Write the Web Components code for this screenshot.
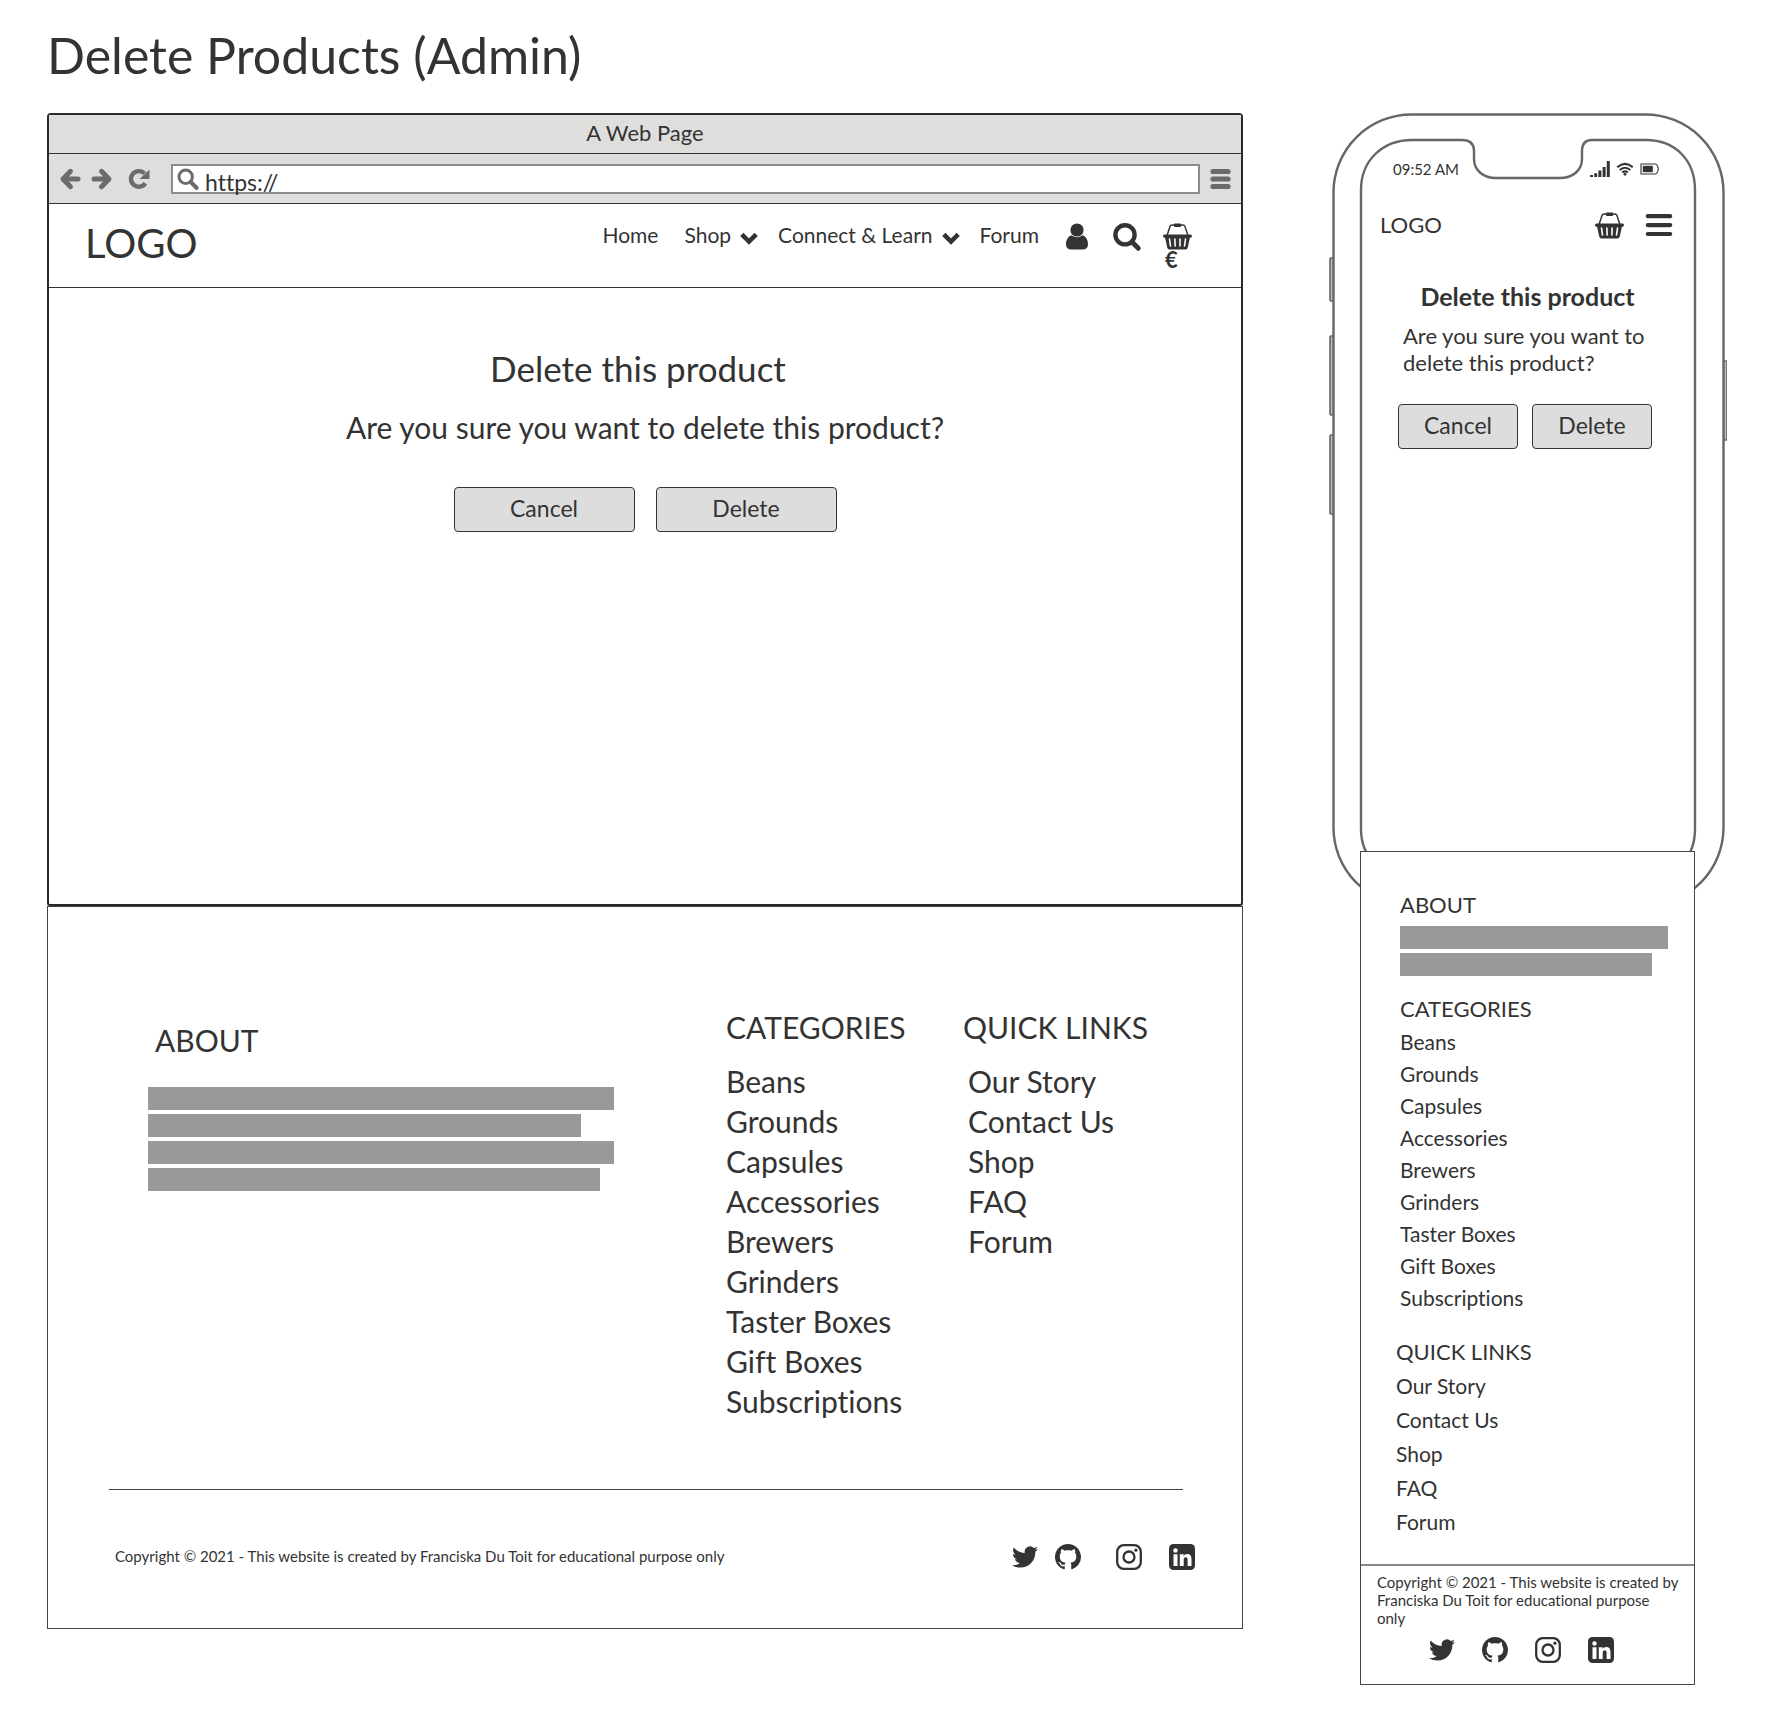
<!DOCTYPE html>
<html lang="en">
<head>
<meta charset="utf-8">
<meta name="viewport" content="width=device-width, initial-scale=1">
<title>Delete Products (Admin)</title>
<style>
  :root { --ink: #333; --bar: #999; --chrome: #dededd; }
  body { margin: 0; background: #fff; color: var(--ink); font-family: Lato, "Open Sans", sans-serif; font-size: 22px; line-height: 28px; font-variant-ligatures: none; }
</style>
</head>
<body>
<wire-board>
  <span slot="title">Delete Products (Admin)</span>
  <div slot="desktop">
    <browser-window heading="A Web Page">
      <site-nav></site-nav>
      <confirm-box>
        <span slot="heading">Delete this product</span>
        <span slot="text">Are you sure you want to delete this product?</span>
      </confirm-box>
    </browser-window>
    <site-footer></site-footer>
  </div>
  <phone-frame slot="mobile">
    <site-nav compact></site-nav>
    <confirm-box compact>
      <span slot="heading">Delete this product</span>
      <span slot="text">Are you sure you want to delete this product?</span>
    </confirm-box>
    <site-footer slot="footer" compact></site-footer>
  </phone-frame>
</wire-board>

<script>
const RESET = `
  *, *::before, *::after { box-sizing: border-box; }
  h1, h2, h3, p, ul { margin: 0; padding: 0; font-weight: 400; }
  ul { list-style: none; }
  a { color: inherit; text-decoration: none; }
  button { font: inherit; color: inherit; background: none; border: 0; padding: 0; cursor: pointer; }
`;

function define(name, render) {
  customElements.define(name, class extends HTMLElement {
    connectedCallback() {
      if (this.shadowRoot) return;
      const t = document.createElement('template');
      t.innerHTML = `<style>${RESET}</style>` + render(this);
      this.attachShadow({ mode: 'open' }).append(t.content.cloneNode(true));
    }
  });
}

/* Each entry: [width, height, markup] */
const ICONS = {
  back: [21, 22, '<path d="M10.500 3.300 3 11l7.500 7.700M4 11h14" fill="none" stroke="currentColor" stroke-width="5" stroke-linecap="round" stroke-linejoin="round"/>'],
  forward: [21, 22, '<path d="M10.500 3.300 18 11l-7.500 7.700M17 11H3" fill="none" stroke="currentColor" stroke-width="5" stroke-linecap="round" stroke-linejoin="round"/>'],
  reload: [22, 22, '<path d="M17.300 15.200A7.800 7.800 0 1 1 16.500 5.600" fill="none" stroke="currentColor" stroke-width="4.400"/><path d="M21.500 1.500v9.500H11.500z" fill="currentColor"/>'],
  find: [22, 22, '<circle cx="8.700" cy="8.700" r="6.700" fill="none" stroke="currentColor" stroke-width="3"/><path d="m13.700 14 6 6" stroke="currentColor" stroke-width="4" stroke-linecap="round"/>'],
  stack: [21, 22, '<path d="M3 3.500h15M3 11h15M3 18.500h15" stroke="currentColor" stroke-width="5.200" stroke-linecap="round"/>'],
  chevron: [18, 14, '<path d="M1.800 3.400 9 10.600l7.200-7.200" fill="none" stroke="currentColor" stroke-width="4.600"/>'],
  user: [28, 28, '<path d="M8.500 13.200C5 14.500 3 18 3 22.300c0 3.300 1.700 5.200 4.400 5.200h13.200c2.700 0 4.400-1.900 4.400-5.200 0-4.300-2-7.800-5.500-9.100a8.300 8.300 0 0 1-11 0z" fill="currentColor"/><circle cx="14" cy="8" r="6.600" fill="currentColor"/>'],
  search: [28, 29, '<circle cx="12" cy="12.800" r="9.600" fill="none" stroke="currentColor" stroke-width="4.400"/><path d="m19 20 6.300 6.300" stroke="currentColor" stroke-width="4.800" stroke-linecap="round"/>'],
  basket: [29, 28, '<path d="M4.200 13 7 4.600Q7.500 3 9.200 3h10.600Q21.500 3 22 4.600L24.800 13" fill="none" stroke="currentColor" stroke-width="1.500"/><rect x="10.800" y="1.500" width="7.400" height="3.400" rx="1.200" fill="currentColor"/><path d="M1.500 12.500h26q1.500 0 1.500 1.500t-1.500 1.800h-.600L24.700 25.800q-.4 1.700-2.200 1.700h-16q-1.800 0-2.200-1.700L2.100 15.800h-.600Q0 15.500 0 14t1.500-1.500z" fill="currentColor"/><path d="M6.500 17l1 7M11.900 17l.2 7M17.100 17l-.2 7M22.500 17l-1 7" stroke="#fff" stroke-width="1.600" stroke-linecap="round"/>'],
  menu: [26, 28, '<path d="M1.800 5.200h22.400M1.800 14.100h22.400M1.800 23h22.400" stroke="currentColor" stroke-width="4.200" stroke-linecap="round"/>'],
  signal: [20, 18, '<path d="M0 15h3v2H0zM4.200 13.300h3V17h-3zM8.400 10.500h3V17h-3zM12.600 7h3v10h-3zM16.800 1h3v16h-3z" fill="currentColor"/>'],
  wifi: [18, 14, '<path d="M1.200 5.200q7.800-6.800 15.600 0M3.700 8q5.300-4.500 10.600 0M6.200 10.500q2.800-2.200 5.600 0" fill="none" stroke="currentColor" stroke-width="2.100"/><circle cx="9" cy="12.300" r="1.400" fill="currentColor"/>'],
  battery: [20, 12, '<path d="M1 1h14.800l1.800 2q1.500 3 0 6l-1.800 2H1z" fill="none" stroke="currentColor" stroke-width="1.100"/><path d="M2.800 2.800h10v6.400h-10z" fill="currentColor"/>'],
  twitter: [24, 24, '<path fill="currentColor" d="M23.953 4.570a10 10 0 01-2.825.775 4.958 4.958 0 002.163-2.723c-.951.555-2.005.959-3.127 1.184a4.920 4.920 0 00-8.384 4.482C7.690 8.095 4.067 6.130 1.640 3.162a4.822 4.822 0 00-.666 2.475c0 1.710.870 3.213 2.188 4.096a4.904 4.904 0 01-2.228-.616v.060a4.923 4.923 0 003.946 4.827 4.996 4.996 0 01-2.212.085 4.936 4.936 0 004.604 3.417 9.867 9.867 0 01-6.102 2.105c-.390 0-.779-.023-1.170-.067a13.995 13.995 0 007.557 2.209c9.053 0 13.998-7.496 13.998-13.985 0-.210 0-.420-.015-.630A9.935 9.935 0 0024 4.590z"/>'],
  github: [16, 16, '<path fill="currentColor" d="M8 0C3.580 0 0 3.580 0 8c0 3.540 2.290 6.530 5.470 7.590.4.070.55-.170.55-.380 0-.190-.010-.820-.010-1.490-2.010.370-2.530-.490-2.690-.940-.090-.230-.480-.940-.820-1.130-.280-.150-.680-.520-.010-.530.630-.010 1.080.580 1.230.820.720 1.210 1.870.870 2.330.660.070-.520.280-.870.510-1.070-1.780-.200-3.640-.890-3.640-3.950 0-.870.310-1.590.820-2.150-.080-.200-.360-1.020.080-2.120 0 0 .670-.210 2.200.820.640-.180 1.320-.270 2-.270.680 0 1.360.090 2 .270 1.530-1.040 2.200-.820 2.200-.820.440 1.100.160 1.920.080 2.120.510.560.820 1.270.820 2.150 0 3.070-1.870 3.750-3.650 3.950.290.250.540.730.540 1.480 0 1.070-.010 1.930-.010 2.200 0 .210.150.460.550.380A8.013 8.013 0 0016 8c0-4.420-3.580-8-8-8z"/>'],
  instagram: [26, 26, '<rect x="1.200" y="1.200" width="23.600" height="23.600" rx="6.500" fill="none" stroke="currentColor" stroke-width="2.300"/><circle cx="13" cy="13" r="5.500" fill="none" stroke="currentColor" stroke-width="2.300"/><circle cx="19.900" cy="6.200" r="1.600" fill="currentColor"/>'],
  linkedin: [26, 26, '<rect width="26" height="26" rx="4.500" fill="currentColor"/><circle cx="6.500" cy="6.500" r="2.200" fill="#fff"/><path fill="#fff" d="M4.500 10.300h4V22h-4zM10.800 10.300h3.800v1.600c.7-1.200 2-1.900 3.600-1.900 3 0 4.300 1.900 4.300 5V22h-3.900v-6.200c0-1.600-.5-2.500-1.800-2.500-1.400 0-2.100 1-2.100 2.500V22h-3.900z"/>']
};

define('wire-icon', el => {
  const [w, h, body] = ICONS[el.getAttribute('name')];
  const width = el.getAttribute('size') || w;
  return `<style>
    :host { display: inline-flex; flex: none; }
    svg { display: block; overflow: visible; }
  </style><svg width="${width}" height="${Math.round(width * h / w)}" viewBox="0 0 ${w} ${h}" aria-hidden="true">${body}</svg>`;
});

define('wire-board', () => `<style>
    :host { display: block; padding: 25px 41px 25px 47px; }
    h1 { font-size: 50px; line-height: 60px; }
    main { display: grid; grid-template-columns: minmax(0, 1fr) 398px; gap: 86px; align-items: start; padding-top: 28px; }
  </style>
  <h1><slot name="title"></slot></h1>
  <main><slot name="desktop"></slot><slot name="mobile"></slot></main>`);

define('browser-window', el => `<style>
    :host { display: block; }
    section { border: 2px solid #2b2a2b; border-radius: 4px 4px 3px 3px; }
    .title { background: var(--chrome); border-bottom: 1px solid var(--ink); text-align: center; line-height: 28px; padding: 4px 0 6px; }
    .tools { display: flex; align-items: center; gap: 10px; height: 50px; padding: 0 10px 0 11px; color: #6b6b6b; background: var(--chrome); border-bottom: 1px solid var(--ink); }
    .tools button { display: flex; }
    .tools button:nth-of-type(3) { padding: 0 11px 0 6px; }
    label { flex: 1; display: flex; align-items: center; gap: 6px; height: 30px; padding-left: 4px; background: #fff; border: 2px solid #8c8c8c; }
    input { flex: 1; min-width: 0; height: 34px; padding: 6px 0 0; border: 0; outline: 0; background: none; font: inherit; font-size: 23px; line-height: 28px; color: var(--ink); }
    .page { min-height: 700px; }
  </style>
  <section>
    <div class="title">${el.getAttribute('heading')}</div>
    <div class="tools">
      <button aria-label="Back"><wire-icon name="back"></wire-icon></button>
      <button aria-label="Forward"><wire-icon name="forward"></wire-icon></button>
      <button aria-label="Reload"><wire-icon name="reload"></wire-icon></button>
      <label><wire-icon name="find"></wire-icon><input type="text" aria-label="Address" value="https://"></label>
      <button aria-label="Browser menu"><wire-icon name="stack"></wire-icon></button>
    </div>
    <div class="page"><slot></slot></div>
  </section>`);

define('site-nav', el => el.hasAttribute('compact') ? `<style>
    :host { display: block; }
    header { display: flex; align-items: center; justify-content: space-between; padding: 32px 23px 0 20px; }
    nav { display: flex; gap: 22px; }
    button, a { display: flex; }
  </style>
  <header><a href="#">LOGO</a><nav>
    <a href="#" aria-label="Basket"><wire-icon name="basket"></wire-icon></a>
    <button aria-label="Menu"><wire-icon name="menu"></wire-icon></button>
  </nav></header>` : `<style>
    :host { display: block; }
    header { display: flex; align-items: flex-start; justify-content: space-between; min-height: 84px; padding: 17px 49px 0 36px; border-bottom: 1px solid var(--ink); }
    .logo { font-size: 40px; line-height: 44px; }
    nav, .links, .icons { display: flex; align-items: flex-start; }
    nav { gap: 18px; font-size: 21px; }
    .links { gap: 20px; }
    .icons { gap: 22px; padding-top: 1px; }
    .links > *, .icons > * { display: flex; align-items: center; }
    .text { padding-right: 6px; }
    .drop { gap: 9px; }
    .drop wire-icon { padding-top: 5px; }
    .icons .cart { flex-direction: column; align-items: flex-start; padding: 0; font-size: 22px; font-weight: 700; line-height: 20px; }
    .cart span { padding-left: 2px; }
  </style>
  <header><a class="logo" href="#">LOGO</a><nav>
    <div class="links">
      <a class="text" href="#">Home</a>
      <button class="drop" aria-haspopup="true">Shop<wire-icon name="chevron"></wire-icon></button>
      <button class="drop" aria-haspopup="true">Connect &amp; Learn<wire-icon name="chevron"></wire-icon></button>
      <a class="text" href="#">Forum</a>
    </div>
    <div class="icons">
      <a href="#" aria-label="Account"><wire-icon name="user"></wire-icon></a>
      <button aria-label="Search"><wire-icon name="search"></wire-icon></button>
      <a class="cart" href="#" aria-label="Basket"><wire-icon name="basket"></wire-icon><span>€</span></a>
    </div>
  </nav></header>`);

define('confirm-box', () => `<style>
    :host { display: block; padding-top: 60px; text-align: center; }
    h2 { font-size: 35px; line-height: 40px; padding-right: 14px; }
    p { font-size: 30px; line-height: 36px; padding-top: 21px; }
    form { display: flex; justify-content: center; gap: 21px; padding-top: 42px; }
    button { width: 181px; height: 45px; padding-bottom: 4px; font-size: 23px; background: #ddd; border: 1px solid var(--ink); border-radius: 4px; }
    :host([compact]) { padding: 42px 38px 0; }
    :host([compact]) h2 { font-size: 25px; line-height: 30px; font-weight: 700; padding: 0; }
    :host([compact]) p { font-size: 22px; line-height: 27px; padding: 11px 0 0 5px; text-align: left; }
    :host([compact]) form { justify-content: flex-start; gap: 14px; padding-top: 28px; }
    :host([compact]) button { width: 120px; }
  </style>
  <h2><slot name="heading"></slot></h2>
  <p><slot name="text"></slot></p>
  <form><button type="button">Cancel</button><button type="button">Delete</button></form>`);

define('text-bars', el => `<style>
    :host { display: grid; gap: 4px; }
    i { display: block; height: 23px; background: var(--bar); }
  </style>` + el.getAttribute('widths').split(' ').map(w => `<i style="width:${w}%"></i>`).join(''));

define('link-list', el => `<style>
    :host { display: block; }
    h3 { font-size: var(--size); line-height: var(--head); padding-bottom: var(--gap); }
    ul { font-size: var(--item); line-height: var(--row); padding-left: var(--indent, 0); }
    a { display: block; }
  </style><h3>${el.getAttribute('heading')}</h3><ul>` +
  el.getAttribute('items').split('|').map(t => `<li><a href="#">${t}</a></li>`).join('') + '</ul>');

define('social-links', () => `<style>
    :host { display: grid; grid-template-columns: var(--cols); align-items: center; }
    a { display: flex; }
  </style>
  <a href="#" aria-label="Twitter"><wire-icon name="twitter" size="26"></wire-icon></a>
  <a href="#" aria-label="GitHub"><wire-icon name="github" size="26"></wire-icon></a>
  <a href="#" aria-label="Instagram"><wire-icon name="instagram"></wire-icon></a>
  <a href="#" aria-label="LinkedIn"><wire-icon name="linkedin"></wire-icon></a>`);

define('site-footer', el => {
  const compact = el.hasAttribute('compact');
  return `<style>
    :host { display: block; background: #fff; border: 1px solid #444; --size: 30px; --item: 30px; --head: 36px; --gap: 16px; --row: 40px; --cols: 43px 61px 53px 26px; }
    h3 { font-size: var(--size); line-height: var(--head); }
    .cols { display: grid; grid-template-columns: 578fr 237fr 279fr; padding: 102px 0 68px 100px; }
    .about { padding: 13px 112px 0 0; }
    .about h3 { padding: 0 0 29px 7px; }
    .quick { --indent: 5px; }
    hr { margin: 0 59px 0 61px; border: 0; border-top: 1px solid #444; }
    .legal { display: flex; justify-content: space-between; padding: 54px 47px 58px 67px; font-size: 15px; line-height: 24px; }
    :host([compact]) { --size: 22px; --item: 21px; --head: 28px; --gap: 3px; --row: 32px; --cols: repeat(3, 53px) 26px; }
    :host([compact]) .cols { display: flex; flex-direction: column; padding: 39px 26px 25px 39px; }
    :host([compact]) .about { padding: 0 0 19px; }
    :host([compact]) .about h3 { padding: 0 0 7px; }
    :host([compact]) .quick { --indent: 0; --row: 34px; padding-top: 24px; margin-left: -4px; }
    :host([compact]) hr { margin: 0; border-top: 2px solid #888; }
    :host([compact]) .legal { display: grid; gap: 10px; padding: 7px 8px 21px 16px; line-height: 18px; }
    :host([compact]) social-links { padding-left: 52px; }
  </style>
  <div class="cols">
    <section class="about"><h3>ABOUT</h3><text-bars widths="${compact ? '100 94' : '100 93 100 97'}"></text-bars></section>
    <link-list heading="CATEGORIES" items="Beans|Grounds|Capsules|Accessories|Brewers|Grinders|Taster Boxes|Gift Boxes|Subscriptions"></link-list>
    <link-list class="quick" heading="QUICK LINKS" items="Our Story|Contact Us|Shop|FAQ|Forum"></link-list>
  </div>
  <hr>
  <div class="legal"><p>Copyright © 2021 - This website is created by Franciska Du Toit for educational purpose ${compact ? '<br>' : ''}only</p><social-links></social-links></div>`;
});

define('phone-frame', () => `<style>
    :host { display: block; position: relative; padding: 0 32px 0 31px; }
    .shell { position: absolute; inset: 0 auto auto 0; z-index: -1; }
    .screen { min-height: 738px; }
    .status { display: flex; align-items: center; padding: 46px 35px 0 33px; font-size: 15px; line-height: 20px; }
    .status div { display: flex; align-items: center; gap: 6px; margin-left: auto; }
  </style>
  <svg class="shell" width="398" height="800" viewBox="0 1 398 800" fill="none" stroke="#666" stroke-width="2.400" aria-hidden="true">
    <g fill="#bbb" stroke-width="1.600"><rect x="1" y="146" width="5" height="43" rx="1"/><rect x="1" y="224" width="5" height="79" rx="1"/><rect x="1" y="323" width="5" height="79" rx="1"/><rect x="393" y="249" width="5" height="79" rx="1"/></g>
    <rect x="4.500" y="2.500" width="390" height="791" rx="78" fill="#fff"/>
    <path d="M32 717V78C32 48 54 28 83 28h50c8 0 12 4 12 11v8c0 12 10 19 22 19h64c12 0 22-7 22-19v-8c0-7 3-11 10-11h54c29 0 49 20 49 50v639c0 29-20 50-49 50H83c-29 0-51-21-51-50z"/>
  </svg>
  <div class="screen">
    <div class="status"><span>09:52 AM</span><div><wire-icon name="signal"></wire-icon><wire-icon name="wifi"></wire-icon><wire-icon name="battery"></wire-icon></div></div>
    <slot></slot>
  </div>
  <slot name="footer"></slot>`);
</script>
</body>
</html>
